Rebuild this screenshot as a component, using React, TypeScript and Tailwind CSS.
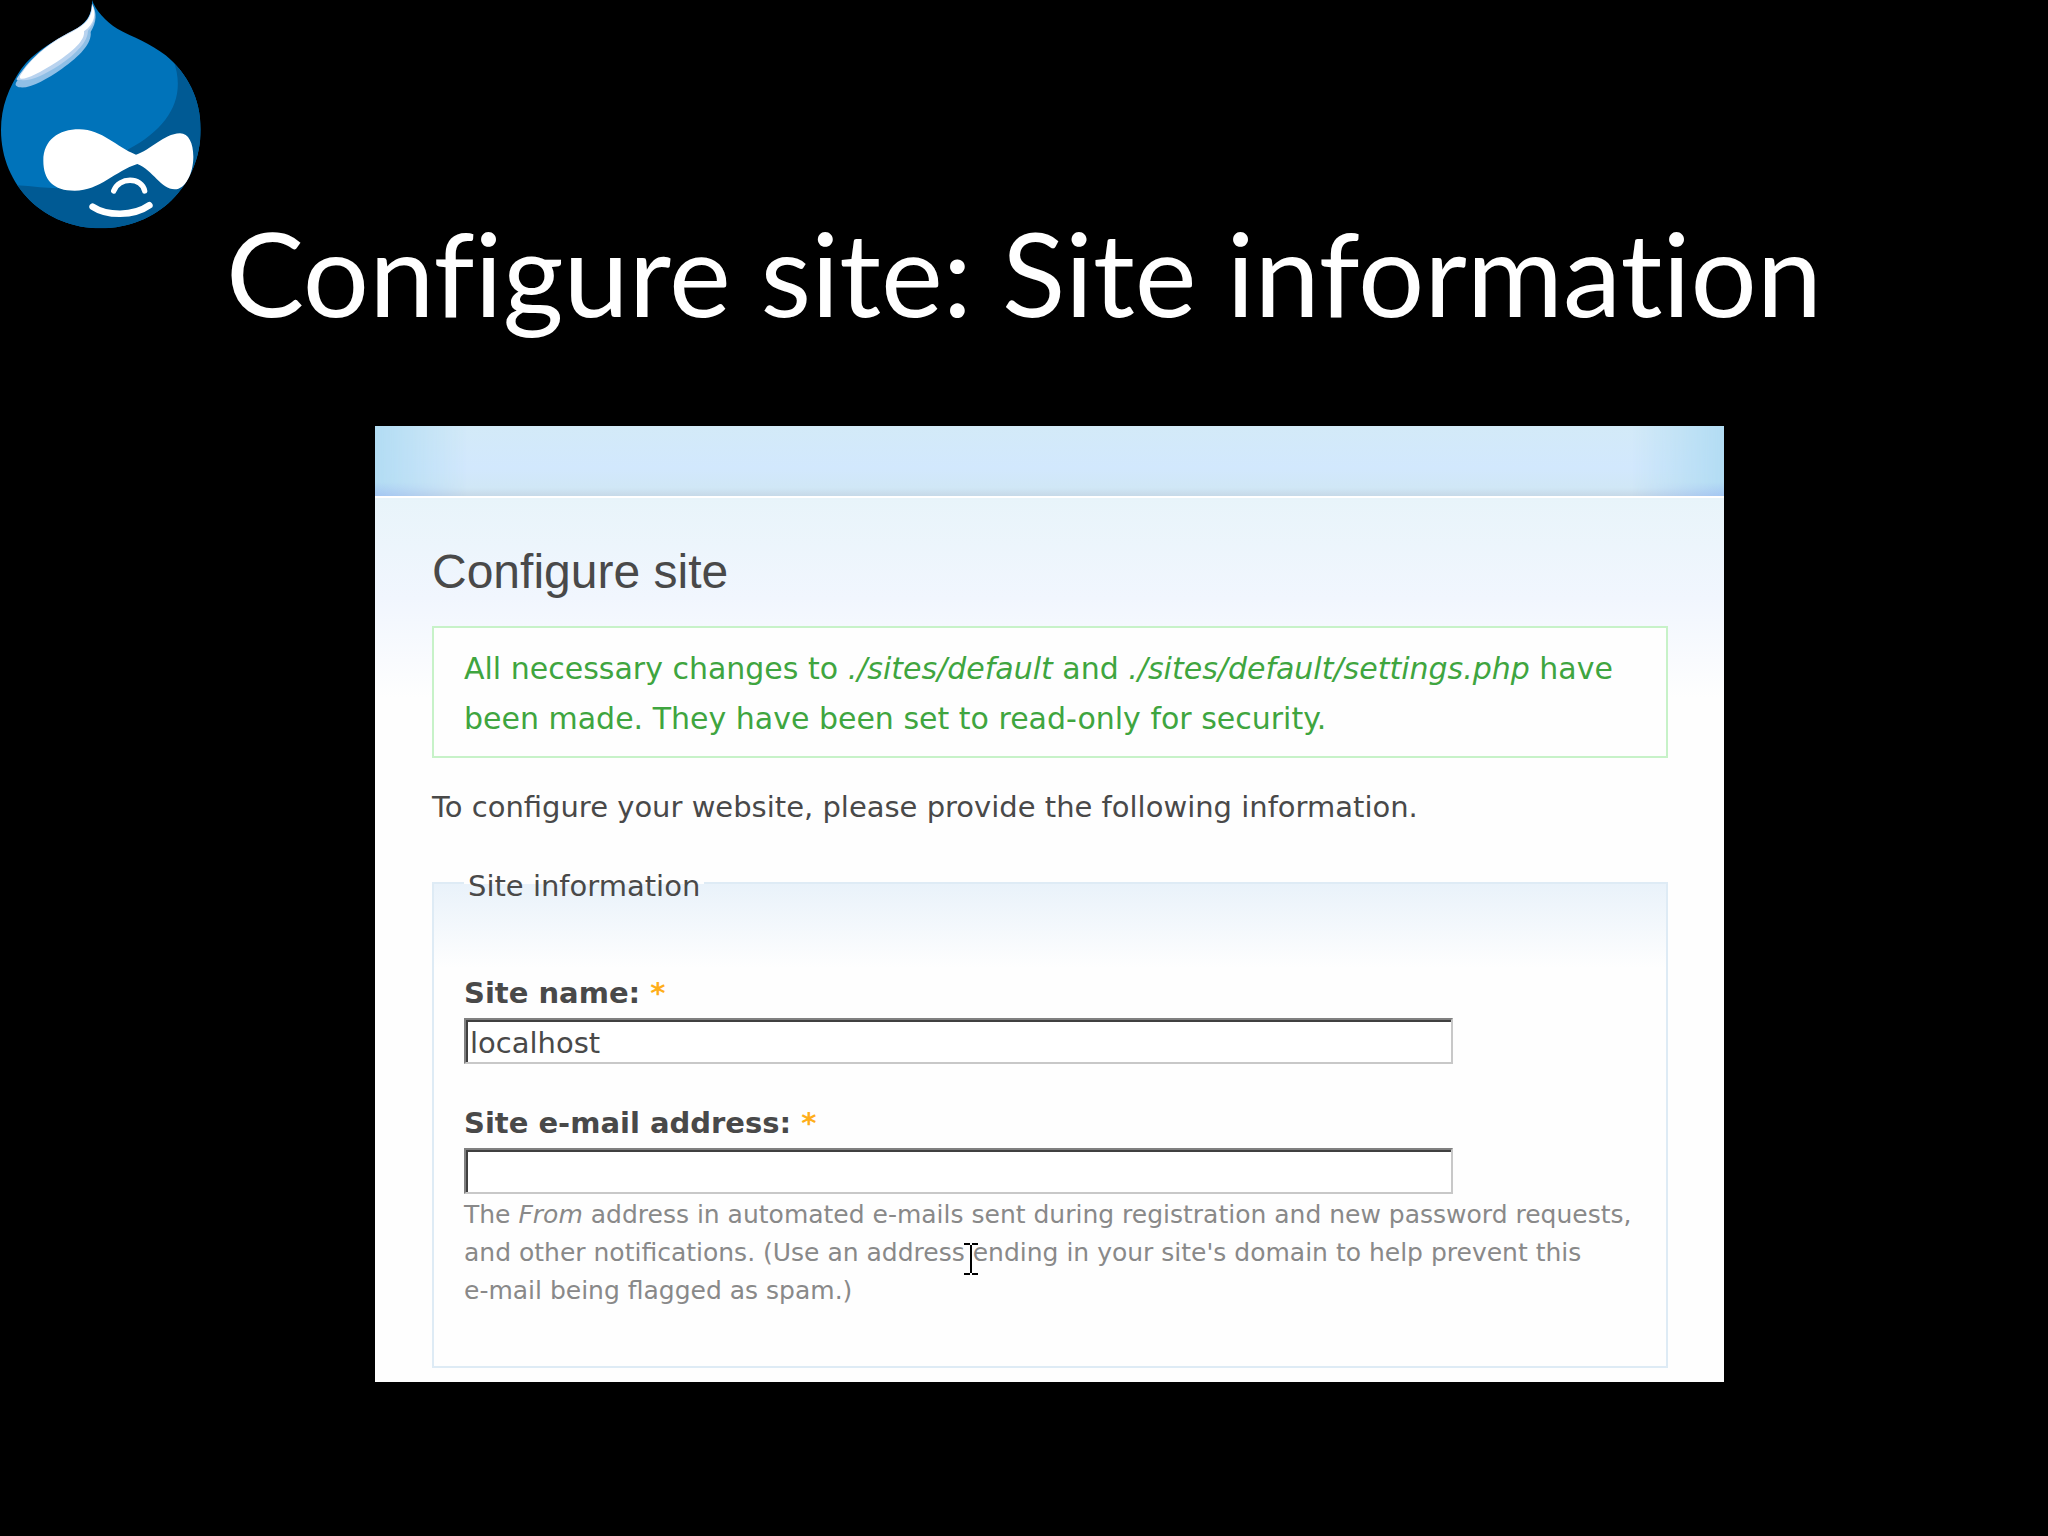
const DropLogo = () => (
  <svg
    className="h-[240px] w-[220px]"
    viewBox="0 0 660 720"
    role="img"
    aria-label="Drupal"
  >
    <defs>
      <clipPath id="drop">
        <path d="M276 0C286 30 318 66 352 86C400 112 452 130 497 166C562 220 602 296 602 388C602 560 470 685 303 685C134 685 3 558 3 390C3 320 26 262 64 206C100 158 150 130 204 102C252 78 278 50 276 0Z" />
      </clipPath>
    </defs>
    <g clipPath="url(#drop)">
      <rect width="660" height="720" fill="#0073ba" />
      <path
        d="M520 180C560 290 510 380 385 448L290 556C200 575 120 560 50 556L60 720H660V180Z"
        fill="#005a94"
      />
    </g>
    <path
      d="M48 248C100 160 160 122 215 94C262 70 274 50 276 10C292 40 290 66 272 96C276 130 240 168 186 206C140 238 90 266 60 262C50 260 44 256 48 248Z"
      fill="#8fbfe6"
    />
    <path
      d="M50 236C100 160 160 122 215 94C262 70 274 50 276 12C290 40 288 66 264 92C264 124 230 160 180 194C130 226 90 244 64 240C54 240 48 240 50 236Z"
      fill="#b9d3ef"
    />
    <path
      d="M62 224C104 160 160 124 215 96C262 72 276 50 277 14C289 44 284 70 252 94C256 120 220 154 170 186C120 218 84 236 66 236C58 236 58 230 62 224Z"
      fill="#fff"
    />
    <path
      d="M130 482C130 420 176 388 238 388C306 388 350 442 408 464C450 452 490 402 540 400C566 400 580 430 580 470C580 520 556 568 524 568C484 568 458 510 412 492C346 512 300 572 224 572C160 572 130 540 130 482Z"
      fill="#fff"
    />
    <path
      d="M341 573C356 530 426 530 434 573"
      fill="none"
      stroke="#fff"
      strokeWidth="16"
      strokeLinecap="round"
    />
    <path
      d="M278 620C320 648 400 650 448 616"
      fill="none"
      stroke="#fff"
      strokeWidth="20"
      strokeLinecap="round"
    />
  </svg>
);

const TextCursor = () => (
  <svg
    className="absolute top-[46px] left-[499px] h-[34px] w-[16px]"
    viewBox="0 0 16 34"
    fill="none"
    stroke="#000"
    strokeWidth="2"
    aria-hidden="true"
  >
    <path d="M1 2H7M9 2H15M8 3V31M1 32H7M9 32H15" />
  </svg>
);

const Required = () => (
  <span className="text-[#ffae1a]" title="This field is required.">
    *
  </span>
);

const inputClass =
  'block h-[46px] w-full max-w-[989px] border-2 border-t-[#808080] border-r-[#c8c8c8] border-b-[#c8c8c8] border-l-[#808080] bg-white pt-1 pl-1 text-[29px] text-[#494949] shadow-[inset_2px_2px_0_#404040] outline-none';

const ConfigureForm = () => (
  <section className="bg-[#fefefe] font-['DejaVu_Sans',sans-serif] text-[29px] text-[#494949]">
    <div className="flex h-[70px] justify-between bg-[linear-gradient(#d3eaf8,#d2e8fd_60%,#d0e7f6_88%,#c6d9e8)]">
      <div className="w-[92px] bg-linear-to-b from-[#b2dcf3] from-80% to-[#a4c6f2] mask-r-from-0%" />
      <div className="w-[92px] bg-linear-to-b from-[#b2dcf3] from-80% to-[#a4c6f2] mask-l-from-0%" />
    </div>
    <div className="border-t-2 border-white bg-[linear-gradient(#e8f4fa,#f1f6fe_100px,#fefefe_200px)] pt-12 pr-14 pb-[14px] pl-[57px]">
      <h2 className="font-['Liberation_Sans',sans-serif] text-5xl leading-[52px]">
        Configure site
      </h2>
      <p className="mt-7 border-2 border-[#c7f2c8] bg-[#fefefe] px-[30px] pt-4 pb-3 text-[30px] leading-[50px] text-[#3fa53f]">
        All necessary changes to <em>./sites/default</em> and{' '}
        <em>./sites/default/settings.php</em> have been made. They have been set
        to read-only for security.
      </p>
      <p className="mt-6 leading-[50px]">
        To configure your website, please provide the following information.
      </p>
      <fieldset className="mt-7 border-2 border-[#deebf5] bg-[linear-gradient(#e9f2fa,#fefefe_84px)] px-[30px] pb-14">
        <legend className="px-1 pt-[6px] leading-[40px]">
          Site information
        </legend>
        <div className="pt-[62px]">
          <label htmlFor="site-name" className="block leading-[50px] font-bold">
            Site name: <Required />
          </label>
          <input
            id="site-name"
            type="text"
            defaultValue="localhost"
            className={inputClass}
          />
        </div>
        <div className="pt-[34px]">
          <label htmlFor="site-mail" className="block leading-[50px] font-bold">
            Site e-mail address: <Required />
          </label>
          <input id="site-mail" type="email" className={inputClass} />
          <div className="relative mt-[2px] text-[25px] leading-[38px] text-[#898989]">
            The <em>From</em> address in automated e-mails sent during
            registration and new password requests, and other notifications.
            (Use an address ending in your site's domain to help prevent this{' '}
            <span className="whitespace-nowrap">e-mail</span> being flagged as
            spam.)
            <TextCursor />
          </div>
        </div>
      </fieldset>
    </div>
  </section>
);

const App = () => (
  <main className="min-h-screen bg-black pb-16">
    <header className="flex flex-col">
      <DropLogo />
      <h1 className="-mt-7 text-center font-['Lato',sans-serif] text-[117px] leading-[120px] text-white [font-variant-ligatures:none]">
        Configure site: Site information
      </h1>
    </header>
    <div className="mt-[94px] pr-[324px] pl-[375px]">
      <ConfigureForm />
    </div>
  </main>
);

export default App;
